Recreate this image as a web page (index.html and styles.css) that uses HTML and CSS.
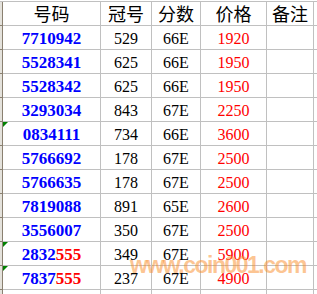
FILE: index.html
```html
<!DOCTYPE html>
<html lang="zh">
<head>
<meta charset="utf-8">
<link rel="stylesheet" href="styles.css">
</head>
<body>
<div class="sheet">
  <div class="grid">
    <div class="rh"></div><div class="c hd">号码</div><div class="c hd">冠号</div><div class="c hd">分数</div><div class="c hd">价格</div><div class="c hd">备注</div><div class="c x"></div>

    <div class="rh"></div><div class="c num">7710942</div><div class="c n">529</div><div class="c n">66E</div><div class="c p">1920</div><div class="c"></div><div class="c x"></div>
    <div class="rh"></div><div class="c num">5528341</div><div class="c n">625</div><div class="c n">66E</div><div class="c p">1950</div><div class="c"></div><div class="c x"></div>
    <div class="rh"></div><div class="c num">5528342</div><div class="c n">625</div><div class="c n">66E</div><div class="c p">1950</div><div class="c"></div><div class="c x"></div>
    <div class="rh"></div><div class="c num">3293034</div><div class="c n">843</div><div class="c n">67E</div><div class="c p">2250</div><div class="c"></div><div class="c x"></div>
    <div class="rh"></div><div class="c num flag">0834111</div><div class="c n">734</div><div class="c n">66E</div><div class="c p">3600</div><div class="c"></div><div class="c x"></div>
    <div class="rh"></div><div class="c num">5766692</div><div class="c n">178</div><div class="c n">67E</div><div class="c p">2500</div><div class="c"></div><div class="c x"></div>
    <div class="rh"></div><div class="c num">5766635</div><div class="c n">178</div><div class="c n">67E</div><div class="c p">2500</div><div class="c"></div><div class="c x"></div>
    <div class="rh"></div><div class="c num">7819088</div><div class="c n">891</div><div class="c n">65E</div><div class="c p">2600</div><div class="c"></div><div class="c x"></div>
    <div class="rh"></div><div class="c num">3556007</div><div class="c n">350</div><div class="c n">67E</div><div class="c p">2500</div><div class="c"></div><div class="c x"></div>
    <div class="rh"></div><div class="c num flag">2832<span class="red">555</span></div><div class="c n">349</div><div class="c n">67E</div><div class="c p">5900</div><div class="c"></div><div class="c x"></div>
    <div class="rh"></div><div class="c num flag">7837<span class="red">555</span></div><div class="c n">237</div><div class="c n">67E</div><div class="c p">4900</div><div class="c"></div><div class="c x"></div>
    <div class="rh"></div><div class="c"></div><div class="c"></div><div class="c"></div><div class="c"></div><div class="c"></div><div class="c x"></div>
  </div>
  <div class="watermark">www.coin001.com</div>
</div>
</body>
</html>
```

FILE: styles.css
```css
html, body {
  margin: 0;
  padding: 0;
  background: #ffffff;
}
.sheet {
  position: relative;
  width: 317px;
  height: 294px;
  overflow: hidden;
  padding-top: 1px;
  box-sizing: border-box;
}
.grid {
  display: grid;
  grid-template-columns: 3px 98px 51px 49px 66px 47px 3px;
  grid-auto-rows: 24px;
  border-top: 1px solid #c0c0c0;
}
.rh {
  background: #e4e2dc;
  border-right: 1px solid #8a8070;
  border-bottom: 1px solid #8a8070;
  box-sizing: border-box;
}
.c {
  position: relative;
  box-sizing: border-box;
  border-right: 1px solid #c0c0c0;
  border-bottom: 1px solid #c0c0c0;
  text-align: center;
  white-space: nowrap;
  font-family: "Liberation Serif", serif;
  font-size: 16px;
  line-height: 20px;
  padding-top: 3px;
  color: #000;
}
.c.x {
  border-right: none;
}
.hd {
  font-family: "Noto Sans CJK SC", sans-serif;
  font-size: 18px;
  line-height: 22px;
  padding-top: 0;
  color: #000;
}
.num {
  color: #0000ff;
  font-weight: bold;
  font-size: 17px;
}
.red, .p {
  color: #ff0000;
}
.flag::before {
  content: "";
  position: absolute;
  left: 0;
  top: 0;
  width: 0;
  height: 0;
  border-top: 5px solid #008000;
  border-right: 5px solid transparent;
}
.watermark {
  position: absolute;
  left: 130px;
  top: 251px;
  font-family: "Liberation Sans", sans-serif;
  font-weight: bold;
  font-size: 23px;
  letter-spacing: -1.5px;
  line-height: 28px;
  color: rgba(250, 140, 40, 0.5);
  white-space: nowrap;
  pointer-events: none;
}
```
